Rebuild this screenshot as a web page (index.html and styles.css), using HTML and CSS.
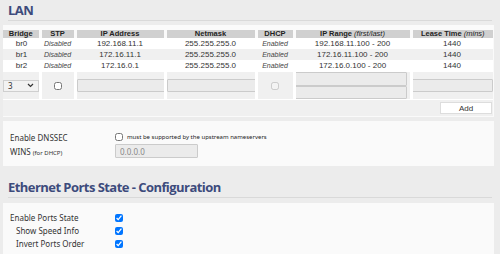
FILE: index.html
```html
<!DOCTYPE html>
<html lang="en">
<head>
  <meta charset="UTF-8">
  <title>Basic Network</title>
  <link rel="stylesheet" href="styles.css">
</head>
<body>

  <!-- LAN -->
  <h2 class="section-title">LAN</h2>
  <div class="section section-lan">
    <table class="lan-grid">
      <colgroup>
        <col style="width:37px"><col style="width:35px"><col style="width:90px"><col style="width:91px">
        <col style="width:38px"><col style="width:117px"><col style="width:82px">
      </colgroup>
      <thead>
        <tr>
          <th>Bridge</th>
          <th>STP</th>
          <th>IP Address</th>
          <th>Netmask</th>
          <th>DHCP</th>
          <th>IP Range <i>(first/last)</i></th>
          <th>Lease Time <i>(mins)</i></th>
        </tr>
      </thead>
      <tbody>
        <tr class="even">
          <td>br0</td><td class="state">Disabled</td><td>192.168.11.1</td><td>255.255.255.0</td>
          <td class="state">Enabled</td><td>192.168.11.100 - 200</td><td>1440</td>
        </tr>
        <tr class="odd">
          <td>br1</td><td class="state">Disabled</td><td>172.16.11.1</td><td>255.255.255.0</td>
          <td class="state">Enabled</td><td>172.16.11.100 - 200</td><td>1440</td>
        </tr>
        <tr class="even">
          <td>br2</td><td class="state">Disabled</td><td>172.16.0.1</td><td>255.255.255.0</td>
          <td class="state">Enabled</td><td>172.16.0.100 - 200</td><td>1440</td>
        </tr>
        <tr class="edit">
          <td>
            <div class="fake-select"><span>3</span>
              <svg width="7" height="5" viewBox="0 0 7 5"><path d="M1 1l2.5 2.5L6 1" fill="none" stroke="#333" stroke-width="1.2"/></svg>
            </div>
          </td>
          <td><input type="checkbox" class="cb"></td>
          <td><input type="text" class="field wide" disabled></td>
          <td><input type="text" class="field wide" disabled></td>
          <td><input type="checkbox" class="cb" disabled></td>
          <td class="range">
            <input type="text" class="field" disabled>
            <input type="text" class="field" disabled>
          </td>
          <td><input type="text" class="field lease" disabled></td>
        </tr>
        <tr class="controls">
          <td colspan="7"><button class="btn-add">Add</button></td>
        </tr>
      </tbody>
    </table>
  </div>

  <div class="section fields">
    <div class="field-row">
      <label>Enable DNSSEC</label>
      <div class="ctrl"><input type="checkbox" class="cb"> <small>must be supported by the upstream nameservers</small></div>
    </div>
    <div class="field-row">
      <label>WINS <small>(for DHCP)</small></label>
      <div class="ctrl"><input type="text" class="field wins" value="0.0.0.0"></div>
    </div>
  </div>

  <!-- Ethernet Ports State -->
  <h2 class="section-title next">Ethernet Ports State - Configuration</h2>
  <div class="section fields ports">
    <div class="field-row">
      <label>Enable Ports State</label>
      <div class="ctrl"><input type="checkbox" class="cb" checked></div>
    </div>
    <div class="field-row">
      <label class="indent">Show Speed Info</label>
      <div class="ctrl"><input type="checkbox" class="cb" checked></div>
    </div>
    <div class="field-row">
      <label class="indent">Invert Ports Order</label>
      <div class="ctrl"><input type="checkbox" class="cb" checked></div>
    </div>
  </div>

</body>
</html>
```

FILE: styles.css
```css
body {
  margin: 0;
  background-color: #ececec;
  font-family: "Noto Sans", "Liberation Sans", sans-serif;
  font-size: 8px;
  color: #222;
  overflow: hidden;
}
/* section headings */
.section-title {
  margin: 0 8px 0 8px;
  padding: 3px 0 3px;
  font-family: "Open Sans", sans-serif;
  font-size: 13px;
  font-weight: 700;
  line-height: 14px;
  letter-spacing: -0.55px;
  color: #3d4b7c;
  border-bottom: 1px solid #d9d9d9;
}
.section-title.next {
  margin-top: 11px;
}
.section-title.next + .section {
  margin-top: 5px;
}
.section {
  background-color: #fafafa;
  margin: 4px 6px 2px 3px;
}
.section-lan {
  padding: 5px 0 1px;
}
/* bridge table */
.lan-grid {
  width: 490px;
  table-layout: fixed;
  border-collapse: collapse;
  font-family: "Liberation Sans", Arial, sans-serif;
  font-size: 8px;
  text-align: center;
}
.lan-grid th {
  background-color: #d0d0d0;
  border-right: 3px solid #fafafa;
  font-weight: bold;
  font-size: 7.5px;
  height: 8px;
  line-height: 8px;
  padding: 0;
  color: #222;
}
.lan-grid th:last-child { border-right: 0; }
.lan-grid th i { font-weight: normal; }
.lan-grid td {
  padding: 0;
  height: 11px;
  line-height: 11px;
  color: #333;
}
.lan-grid tr.even td { background-color: #fff; }
.lan-grid tr.odd td { background-color: #f0f0f0; }
.lan-grid td.state {
  font-style: italic;
  font-size: 7px;
  color: #444;
}
.lan-grid tr.edit td {
  background-color: #f0f0f0;
  border-right: 3px solid #fff;
  border-top: 1px solid #fff;
  height: 27px;
  vertical-align: middle;
}
.lan-grid tr.edit td:last-child { border-right: 0; }
.lan-grid tr.controls td {
  background-color: #f0f0f0;
  border-top: 1px solid #fff;
  height: 16px;
  text-align: right;
}
.fake-select {
  display: flex;
  align-items: center;
  justify-content: space-between;
  box-sizing: border-box;
  height: 12px;
  padding: 0 4px 0 4px;
  background-color: #f2f2f2;
  border: 1px solid #cfcfcf;
  font-family: "Noto Sans", sans-serif;
  font-size: 8px;
  line-height: 10px;
}
.cb {
  width: 8px;
  height: 8px;
  margin: 0;
  vertical-align: middle;
}
.field {
  display: block;
  box-sizing: border-box;
  width: 100%;
  height: 13px;
  margin: 0;
  padding: 0 4px;
  background-color: #ebebeb;
  border: 1px solid #cbcbcb;
  border-radius: 1px;
  font-family: "Noto Sans", sans-serif;
  font-size: 8px;
  color: #777;
}
.field.wide { width: calc(100% + 2px); }
.range .field { width: calc(100% - 2px); margin-left: -1px; height: 14px; }
.range .field + .field { height: 13px; }
.field.lease { width: calc(100% + 3px); margin-left: -3px; }
.btn-add {
  width: 52px;
  height: 12px;
  margin-right: 1px;
  padding: 0;
  background-color: #fff;
  border: 1px solid #ddd;
  font-family: "Liberation Sans", Arial, sans-serif;
  font-size: 8px;
  color: #333;
  vertical-align: middle;
}
/* label / control rows */
.fields {
  padding: 9px 7px 8px;
}
.field-row {
  display: flex;
  align-items: center;
  height: 14px;
}
.field-row label {
  width: 105px;
  font-size: 8px;
  color: #333;
}
.field-row label.indent { padding-left: 6px; width: 99px; }
.field-row small { font-size: 6px; }
.ctrl {
  display: flex;
  align-items: center;
  gap: 4px;
}
.field.wins {
  width: 83px;
  height: 14px;
  color: #888;
}
.ports {
  padding-top: 8px;
  height: 60px;
}
.ports .field-row { height: 13px; }
```
